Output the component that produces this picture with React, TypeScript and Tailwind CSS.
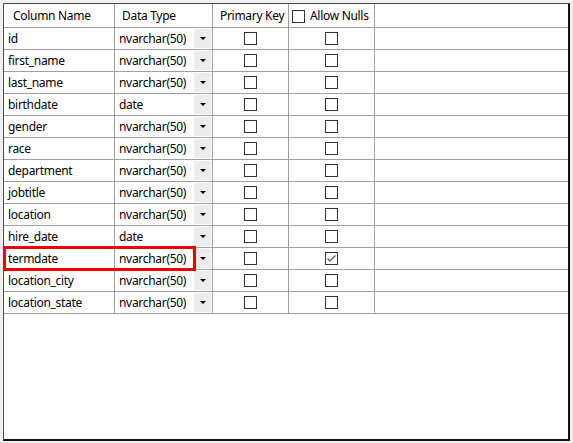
import React from 'react';

type Col = { name: string; type: string; nulls: boolean };

const columns: Col[] = [
    { name: 'id', type: 'nvarchar(50)', nulls: false },
    { name: 'first_name', type: 'nvarchar(50)', nulls: false },
    { name: 'last_name', type: 'nvarchar(50)', nulls: false },
    { name: 'birthdate', type: 'date', nulls: false },
    { name: 'gender', type: 'nvarchar(50)', nulls: false },
    { name: 'race', type: 'nvarchar(50)', nulls: false },
    { name: 'department', type: 'nvarchar(50)', nulls: false },
    { name: 'jobtitle', type: 'nvarchar(50)', nulls: false },
    { name: 'location', type: 'nvarchar(50)', nulls: false },
    { name: 'hire_date', type: 'date', nulls: false },
    { name: 'termdate', type: 'nvarchar(50)', nulls: true },
    { name: 'location_city', type: 'nvarchar(50)', nulls: false },
    { name: 'location_state', type: 'nvarchar(50)', nulls: false },
];

const CheckBox: React.FC<{ checked?: boolean }> = ({ checked }) => (
    <div className="w-[13px] h-[13px] border border-[#333333] bg-white flex items-center justify-center">
        {checked && (
            <svg width="9" height="7" viewBox="0 0 9 7" fill="none">
                <path d="M0.5 3.5 L3 6 L8.5 0.5" stroke="#555555" strokeWidth="1.2" />
            </svg>
        )}
    </div>
);

const App: React.FC = () => {
    return (
        <div
            className="w-[573px] h-[443px] bg-[#f0f0f0] pl-[3px] pt-[3px] text-[12px] tracking-[-0.3px] text-black"
            style={{ fontFamily: '"Noto Sans", "Open Sans", sans-serif' }}
        >
            <div className="relative w-[567px] h-[438px] bg-white border-l border-t border-[#4a4a4a] border-r-2 border-b-2 border-r-[#111111] border-b-[#111111]">
                {/* header */}
                <div className="flex h-[24px] border-b border-[#a0a0a0]">
                    <div className="w-[111px] border-r border-[#a0a0a0] pl-[9px] pt-px flex items-center">Column Name</div>
                    <div className="w-[98px] border-r border-[#a0a0a0] pl-[7px] pt-px flex items-center">Data Type</div>
                    <div className="w-[76px] border-r border-[#a0a0a0] pl-[7px] pt-px flex items-center">Primary Key</div>
                    <div className="w-[86px] border-r border-[#a0a0a0] pl-[3px] pt-px flex items-center gap-[5px]">
                        <CheckBox />
                        <span>Allow Nulls</span>
                    </div>
                    <div className="flex-1" />
                </div>

                {columns.map((c) => (
                    <div key={c.name} className="flex h-[22px] border-b border-[#a0a0a0]">
                        <div className="w-[111px] border-r border-[#a0a0a0] pl-[4px] pt-px flex items-center">{c.name}</div>
                        <div className="w-[98px] border-r border-[#a0a0a0] pl-[4px] flex items-center justify-between">
                            <span className="pt-px">{c.type}</span>
                            <div className="w-[17px] h-[19px] mr-px bg-[#ececec] flex items-center justify-center">
                                <svg width="6" height="3" viewBox="0 0 6 3">
                                    <path d="M0 0 H6 L3 3 Z" fill="#000000" />
                                </svg>
                            </div>
                        </div>
                        <div className="w-[76px] border-r border-[#a0a0a0] flex items-center justify-center">
                            <CheckBox />
                        </div>
                        <div className="w-[86px] border-r border-[#a0a0a0] flex items-center justify-center">
                            <CheckBox checked={c.nulls} />
                        </div>
                        <div className="flex-1" />
                    </div>
                ))}

                {/* highlight annotation */}
                <div className="absolute left-[-1px] top-[242px] w-[193px] h-[25px] border-[3px] border-[#f20000]" />
            </div>
        </div>
    );
};

export default App;
